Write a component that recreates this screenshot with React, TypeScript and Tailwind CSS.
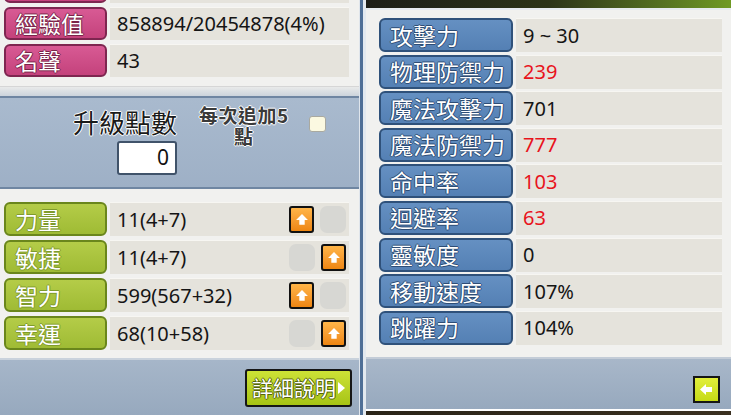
import React from "react";

const cjk = "font-['Noto_Sans_CJK_TC','Noto_Sans_CJK_SC',sans-serif]";
const num = "font-['Noto_Sans','DejaVu_Sans',sans-serif]";

function UpButton() {
  return (
    <div className="w-[25px] h-[27px] rounded-[3px] border-2 border-[#111] bg-gradient-to-b from-[#ffb548] to-[#ee8610] flex items-center justify-center">
      <svg width="14" height="14" viewBox="0 0 13 13">
        <polygon points="6.5,1 12,6.5 9,6.5 9,11 4,11 4,6.5 1,6.5" fill="#fff" />
      </svg>
    </div>
  );
}

function EmptySlot() {
  return <div className="w-[26px] h-[27px] rounded-[7px] bg-[#d7d7d3]" />;
}

function Label({ text, tone }: { text: string; tone: "pink" | "green" | "blue" }) {
  const styles = {
    pink: "bg-gradient-to-b from-[#d85a94] to-[#c4427c] border-[#7e2650] [text-shadow:1px_0_#7a2448,-1px_0_#7a2448,0_1px_#7a2448,0_-1px_#7a2448] w-[103px]",
    green:
      "bg-gradient-to-b from-[#b4cc48] to-[#9fbb34] border-[#6a861c] [text-shadow:1px_0_#7f9b2c,-1px_0_#7f9b2c,0_1px_#7f9b2c,0_-1px_#7f9b2c] w-[103px]",
    blue: "bg-gradient-to-b from-[#6590c2] to-[#5480b4] border-[#2f517a] [text-shadow:1px_0_#2d4d76,-1px_0_#2d4d76,0_1px_#2d4d76,0_-1px_#2d4d76] w-[134px]",
  }[tone];
  return (
    <div
      className={`${styles} ${cjk} shrink-0 h-full rounded-[6px] border-2 flex items-center pl-[9px] text-[23px] text-white leading-none`}
    >
      {text}
    </div>
  );
}

function ValueBox({ children, red }: { children?: React.ReactNode; red?: boolean }) {
  return (
    <div
      className={`${num} flex-1 h-full bg-[#e5e3dc] border-t border-[#f7f6f2] flex items-center pl-[7px] text-[20px] ${
        red ? "text-[#e8141c]" : "text-[#151515]"
      }`}
    >
      {children}
    </div>
  );
}

export default function App() {
  const stats = [
    { label: "力量", value: "11(4+7)", first: true },
    { label: "敏捷", value: "11(4+7)", first: false },
    { label: "智力", value: "599(567+32)", first: true },
    { label: "幸運", value: "68(10+58)", first: false },
  ];

  const details = [
    { label: "攻擊力", value: "9 ~ 30", red: false },
    { label: "物理防禦力", value: "239", red: true },
    { label: "魔法攻擊力", value: "701", red: false },
    { label: "魔法防禦力", value: "777", red: true },
    { label: "命中率", value: "103", red: true },
    { label: "迴避率", value: "63", red: true },
    { label: "靈敏度", value: "0", red: false },
    { label: "移動速度", value: "107%", red: false },
    { label: "跳躍力", value: "104%", red: false },
  ];

  return (
    <div className="w-[731px] h-[415px] overflow-hidden flex bg-white">
      {/* left window */}
      <div className="w-[359px] shrink-0 flex flex-col bg-[#f1f1ef]">
        <div className="flex flex-col gap-[4px] pl-[4px] pr-[10px] mt-[-30px]">
          {/* row scrolled off the top, only its bottom edge shows */}
          <div className="flex gap-[3px] h-[33px]">
            <Label text="" tone="pink" />
            <ValueBox />
          </div>
          <div className="flex gap-[3px] h-[33px]">
            <Label text="經驗值" tone="pink" />
            <ValueBox>858894/20454878(4%)</ValueBox>
          </div>
          <div className="flex gap-[3px] h-[33px]">
            <Label text="名聲" tone="pink" />
            <ValueBox>43</ValueBox>
          </div>
        </div>

        <div className="h-[9px]" />
        <div className="h-[10px] bg-gradient-to-b from-[#e9eaea] to-[#ccd4dc] border-t border-[#d6d6d6]" />
        <div className="h-[93px] border-t-2 border-b-2 border-[#6f86a2] bg-gradient-to-b from-[#a9bace] to-[#9eb0c6] flex pl-[73px]">
          <div className="flex flex-col items-end pt-[9px]">
            <div
              className={`${cjk} text-[26px] leading-[30px] text-[#1a1a1a] [text-shadow:1px_0_#fff,-1px_0_#fff,0_1px_#fff,0_-1px_#fff]`}
            >
              升級點數
            </div>
            <div
              className={`${num} mt-[4px] w-[60px] h-[34px] bg-white border-2 border-[#40536a] rounded-[3px] flex items-center justify-end pr-[6px] text-[21px] text-[#111]`}
            >
              0
            </div>
          </div>
          <div
            className={`${cjk} ml-[22px] pt-[6px] flex flex-col items-center font-bold text-[19px] leading-[21px] tracking-[0.5px] text-[#3a3a3a] [text-shadow:1px_0_#fff,-1px_0_#fff,0_1px_#fff,0_-1px_#fff]`}
          >
            <span>每次追加5</span>
            <span>點</span>
          </div>
          <div className="ml-[20px] mt-[18px] w-[17px] h-[16px] rounded-[3px] bg-[#fbf9e1] border border-[#a9a9a0]" />
        </div>

        <div className="flex flex-col gap-[4px] pl-[4px] pr-[10px] pt-[13px]">
          {stats.map((s) => (
            <div key={s.label} className="flex gap-[3px] h-[34px]">
              <Label text={s.label} tone="green" />
              <ValueBox>
                <span className="flex-1">{s.value}</span>
                <div className="flex gap-[6px] pr-[3px]">
                  {s.first ? <UpButton /> : <EmptySlot />}
                  {s.first ? <EmptySlot /> : <UpButton />}
                </div>
              </ValueBox>
            </div>
          ))}
        </div>

        <div className="mt-[8px] flex-1 border-t-2 border-[#c9d2dc] bg-gradient-to-b from-[#a6b6c9] to-[#97a9be] flex justify-end items-start pt-[9px] pr-[7px]">
          <div
            className={`${cjk} h-[38px] w-[107px] rounded-[3px] border-2 border-[#161616] bg-gradient-to-b from-[#cde236] to-[#a7c414] flex items-center pl-[5px] gap-[2px] text-[21px] text-white [text-shadow:1px_0_#55650a,-1px_0_#55650a,0_1px_#55650a,0_-1px_#55650a]`}
          >
            <span>詳細說明</span>
            <svg width="7" height="12" viewBox="0 0 7 12">
              <polygon points="0,0 7,6 0,12" fill="#fff" />
            </svg>
          </div>
        </div>
      </div>

      {/* divider */}
      <div className="w-[1px] bg-[#dfe5ec]" />
      <div className="w-[3px] bg-[#4f6f96]" />
      <div className="w-[3px] bg-[#e3e9ef]" />

      {/* right window */}
      <div className="flex-1 flex flex-col bg-[#f1f1ef]">
        <div className="h-[8px] bg-gradient-to-r from-[#1c1e18] via-[#2c3418] to-[#6f9a24]" />
        <div className="h-[2px] bg-[#e6ebf0]" />
        <div className="flex flex-col gap-[2.6px] pt-[8px] pl-[13px] pr-[9px]">
          {details.map((d) => (
            <div key={d.label} className="flex gap-[3px] h-[34px]">
              <Label text={d.label} tone="blue" />
              <ValueBox red={d.red}>{d.value}</ValueBox>
            </div>
          ))}
        </div>
        <div className="mt-[12px] flex-1 flex flex-col">
          <div className="flex-1 border-t-2 border-[#c3ccd7] bg-gradient-to-b from-[#a8b7c9] to-[#97a9be] flex justify-end items-start pt-[17px] pr-[11px]">
            <div className="w-[27px] h-[27px] border-2 border-[#161616] bg-gradient-to-b from-[#e2ef3a] to-[#c6da14] flex items-center justify-center">
              <svg width="15" height="13" viewBox="0 0 15 13">
                <polygon points="1,6.5 7,1 7,4 13,4 13,9 7,9 7,12" fill="#fff" />
              </svg>
            </div>
          </div>
          <div className="h-[2px] bg-white" />
          <div className="h-[4px] bg-gradient-to-r from-[#2a2418] to-[#3a3020]" />
        </div>
      </div>
    </div>
  );
}
